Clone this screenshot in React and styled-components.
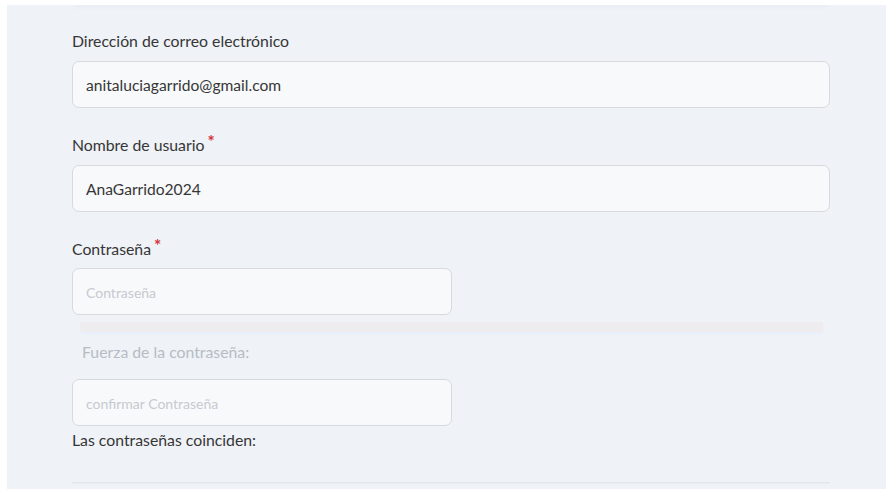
import React from "react";
import styled, { createGlobalStyle } from "styled-components";

const GlobalStyle = createGlobalStyle`
  html, body {
    margin: 0;
    padding: 0;
    background: #ffffff;
  }
  body {
    font-family: Lato, "Open Sans", Arial, sans-serif;
    color: #363636;
  }
  * { box-sizing: border-box; }
`;

const Panel = styled.div`
  margin: 5px 0 0 7px;
  height: 484px;
  background: #eff2f7;
  padding: 0 56px 0 65px;
  overflow: hidden;
`;

/* bottom edge of the card sitting above the form */
const CardEdge = styled.div`
  height: 1px;
  margin: -1px 3px 0 3px;
  background: #ffffff;
  box-shadow: 0 1px 4px rgba(120, 130, 150, 0.18);
`;

const Form = styled.form`
  display: flex;
  flex-direction: column;
  padding-top: 26px;
`;

const Group = styled.div`
  display: flex;
  flex-direction: column;
  margin-bottom: ${(p) => p.$gap ?? 27}px;
`;

const Label = styled.label`
  font-size: 15.8px;
  line-height: 20px;
  color: #363636;
  margin-bottom: ${(p) => p.$gap ?? 10}px;
`;

const Required = styled.span`
  color: #d3323a;
  font-size: 17px;
  font-weight: 700;
  line-height: 1;
  vertical-align: top;
  position: relative;
  top: -2px;
  margin-left: 3px;
`;

const Input = styled.input`
  width: ${(p) => (p.$half ? "380px" : "100%")};
  height: 47px;
  padding: 0 13px;
  border: 1px solid #d6d9de;
  border-radius: 7px;
  background: #f8f9fb;
  font-family: Lato, "Open Sans", Arial, sans-serif;
  font-size: 15.6px;
  color: #363636;
  outline: none;

  &::placeholder {
    color: #c6cad0;
    font-size: 14px;
  }
`;

const Strength = styled.div`
  display: flex;
  flex-direction: column;
  padding: 0 7px 0 8px;
  margin-top: 7px;
`;

const StrengthBar = styled.div`
  height: 10px;
  border-radius: 2px;
  background: #eeecef;
  box-shadow: 0 3px 2px -1px #e7effa;
`;

const StrengthText = styled.div`
  font-size: 15.8px;
  line-height: 20px;
  color: #b7bcc4;
  margin: 10px 0 17px 2px;
`;

const Match = styled.div`
  font-size: 15.8px;
  line-height: 20px;
  color: #363636;
  margin-top: 4px;
`;

const Divider = styled.hr`
  margin: 32px 0 0 0;
  border: none;
  height: 1px;
  background: #e2e5ea;
  box-shadow: 0 1px 1px #e9ecf1;
`;

export default function App() {
  return (
    <>
      <GlobalStyle />
      <Panel>
        <CardEdge />
        <Form onSubmit={(e) => e.preventDefault()}>
          <Group>
            <Label>Dirección de correo electrónico</Label>
            <Input type="email" defaultValue="anitaluciagarrido@gmail.com" />
          </Group>
          <Group>
            <Label>
              Nombre de usuario<Required>*</Required>
            </Label>
            <Input type="text" defaultValue="AnaGarrido2024" />
          </Group>
          <Group $gap={0}>
            <Label $gap={9}>
              Contraseña<Required>*</Required>
            </Label>
            <Input type="password" placeholder="Contraseña" $half />
          </Group>
          <Strength>
            <StrengthBar />
            <StrengthText>Fuerza de la contraseña:</StrengthText>
          </Strength>
          <Input type="password" placeholder="confirmar Contraseña" $half />
          <Match>Las contraseñas coinciden:</Match>
          <Divider />
        </Form>
      </Panel>
    </>
  );
}
